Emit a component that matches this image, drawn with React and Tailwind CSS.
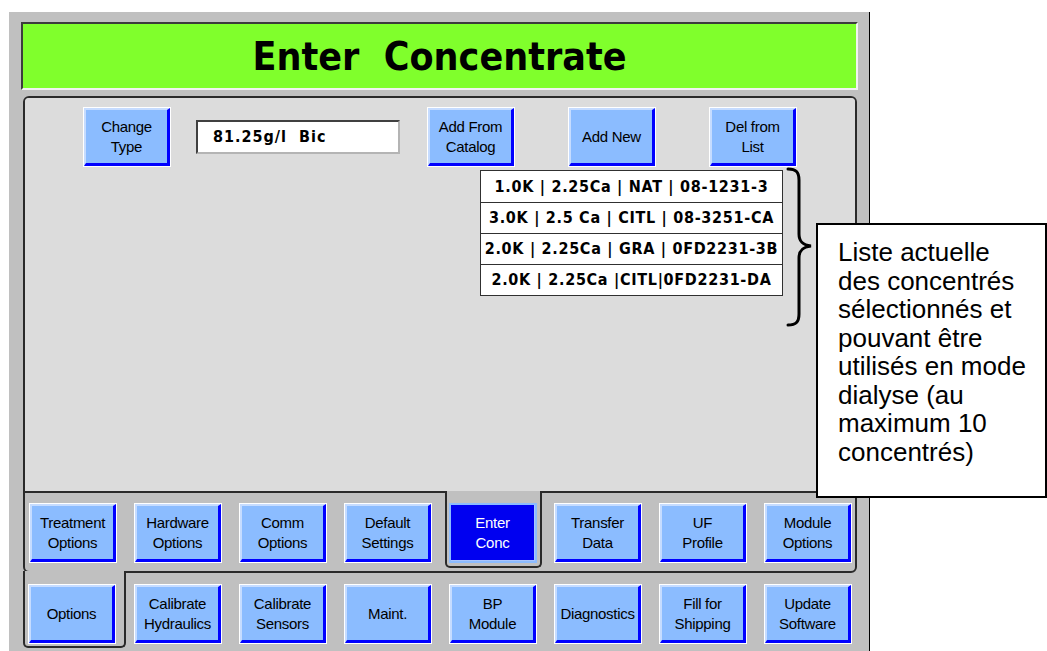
import React from "react"

const rows1 = ["Treatment Options", "Hardware Options", "Comm Options", "Default Settings"]
const rows1b = ["Transfer Data", "UF Profile", "Module Options"]
const rows2 = [["Calibrate", "Hydraulics"], ["Calibrate", "Sensors"], ["Maint."], ["BP", "Module"], ["Diagnostics"], ["Fill for", "Shipping"], ["Update", "Software"]]

const concs = [
    "1.0K | 2.25Ca | NAT | 08-1231-3",
    "3.0K | 2.5 Ca | CITL | 08-3251-CA",
    "2.0K | 2.25Ca | GRA | 0FD2231-3B",
    "2.0K | 2.25Ca |CITL|0FD2231-DA",
]

const cond = "font-['DejaVu_Sans',sans-serif] font-bold font-stretch-condensed"

function Btn({ lines, className = "" }) {
    return (
        <div className={"w-[88px] h-[60px] border border-white flex shrink-0 " + className}>
            <div className="flex-1 flex flex-col items-center justify-center bg-[#8bbcff] border-t-2 border-l-2 border-t-[#c6dcff] border-l-[#c6dcff] border-r-[3px] border-b-[3px] border-r-[#0000ff] border-b-[#0000ff] text-[15px] leading-[20px] text-black font-['Liberation_Sans',sans-serif] tracking-[-0.3px]">
                {lines.map((l, i) => <span key={i}>{l}</span>)}
            </div>
        </div>
    )
}

function Brace() {
    return (
        <svg className="absolute left-[784px] top-[166px]" width="32" height="162" viewBox="0 0 32 162">
            <path d="M4 3 C12 3 15 6 15 14 L15 68 C15 76 19 79 27 80 C19 81 15 84 15 92 L15 148 C15 156 12 159 4 159" fill="none" stroke="black" strokeWidth="3" strokeLinecap="round" />
        </svg>
    )
}

export default function App() {
    return (
        <div className="w-[1047px] h-[651px] bg-white overflow-hidden relative font-['Liberation_Sans',Arial,sans-serif]">
            <div className="ml-[9px] mt-[12px] w-[861px] h-[639px] bg-[#c0c0c0] border-r border-black pt-[10px] pl-[12px]">
                <div className="w-[837px] h-[68px] bg-[#80ff2c] border-2 border-t-[#3c3c3c] border-l-[#3c3c3c] border-b-[#f2f2f2] border-r-[#f2f2f2] flex items-center justify-center">
                    <span className={cond + " text-[39px] leading-none text-black whitespace-pre"}>Enter  Concentrate</span>
                </div>

                <div className="ml-[2px] mt-[6px] w-[834px] h-[477px] border-2 border-[#2a2a2a] rounded-[6px] flex flex-col">
                    <div className="h-[395px] bg-[#dcdcdc] border-b-2 border-[#2a2a2a] rounded-t-[4px] pt-[9px]">
                        <div className="flex items-center pl-[58px]">
                            <Btn lines={["Change", "Type"]} className="h-[59px]" />
                            <div className={"ml-[25px] w-[204px] h-[34px] bg-white border-2 border-t-[#404040] border-l-[#404040] border-b-[#b4b4b4] border-r-[#b4b4b4] flex items-center pl-[15px] text-[16px] tracking-[1px] whitespace-pre " + cond}>81.25g/l  Bic</div>
                            <Btn lines={["Add From", "Catalog"]} className="ml-[27px] h-[59px]" />
                            <Btn lines={["Add New"]} className="ml-[53px] h-[59px]" />
                            <Btn lines={["Del from", "List"]} className="ml-[53px] h-[59px]" />
                        </div>
                        <div className="ml-[455px] mt-[3px] w-[303px] border border-[#303030] bg-white">
                            {concs.map((c, i) => (
                                <div key={i} className={"h-[31px] flex items-center justify-center text-[16px] tracking-[0.7px] whitespace-pre " + cond + (i > 0 ? " border-t border-[#303030]" : "")}>{c}</div>
                            ))}
                        </div>
                    </div>

                    <div className="flex items-start pl-[4px]">
                        {rows1.map((t, i) => (
                            <Btn key={t} lines={t.split(" ")} className={"mt-[10px] " + (i > 0 ? "ml-[17px]" : "")} />
                        ))}
                        <div className="ml-[13px] -mt-[2px] w-[97px] h-[77px] bg-[#c0c0c0] border-x-2 border-b-2 border-[#2a2a2a] rounded-b-[5px] pt-[12px] pl-[2px]">
                            <div className="w-[88px] h-[60px] border-2 border-[#8cbcff] flex">
                                <div className="flex-1 flex flex-col items-center justify-center bg-[#0000f0] border-r border-b border-r-[#a9c6ff] border-b-[#a9c6ff] text-[15px] leading-[20px] text-white font-['Liberation_Sans',sans-serif] tracking-[-0.3px]">
                                    <span>Enter</span>
                                    <span>Conc</span>
                                </div>
                            </div>
                        </div>
                        {rows1b.map((t, i) => (
                            <Btn key={t} lines={t.split(" ")} className={"mt-[10px] " + (i > 0 ? "ml-[17px]" : "ml-[12px]")} />
                        ))}
                    </div>
                </div>

                <div className="ml-[2px] flex items-start">
                    <div className="-mt-[2px] w-[103px] h-[77px] bg-[#c0c0c0] border-x-2 border-b-2 border-[#2a2a2a] rounded-b-[5px] pt-[13px] pl-[3px]">
                        <Btn lines={["Options"]} />
                    </div>
                    {rows2.map((l, i) => (
                        <Btn key={i} lines={l} className={"mt-[11px] " + (i > 0 ? "ml-[17px]" : "ml-[8px]")} />
                    ))}
                </div>
            </div>

            <Brace />

            <div className="absolute left-[816px] top-[223px] w-[231px] h-[275px] bg-white border-2 border-black pl-[20px] pt-[13px] text-[26px] leading-[28.5px] text-black whitespace-nowrap font-['Liberation_Sans',Arial,sans-serif]">
                Liste actuelle<br />
                des concentrés<br />
                sélectionnés et<br />
                pouvant être<br />
                utilisés en mode<br />
                dialyse (au<br />
                maximum 10<br />
                concentrés)
            </div>
        </div>
    )
}
